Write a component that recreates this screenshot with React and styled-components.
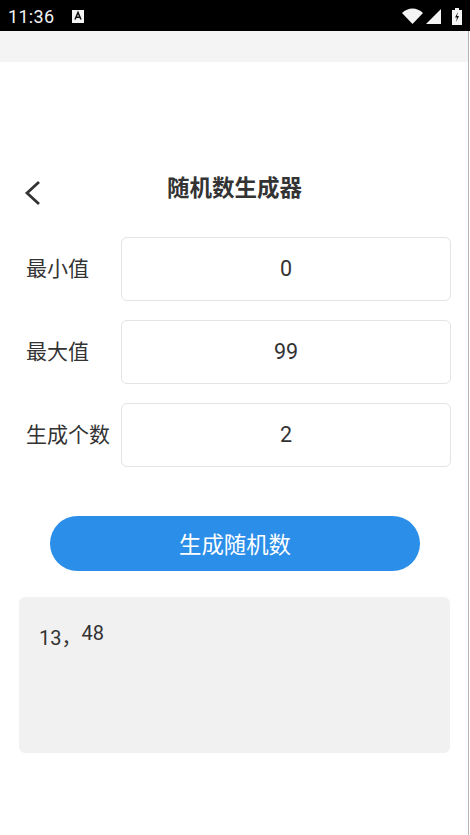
import React from 'react';
import styled, { createGlobalStyle } from 'styled-components';

const GlobalStyle = createGlobalStyle`
  html, body {
    margin: 0;
    padding: 0;
    background: #fff;
  }
  * {
    box-sizing: border-box;
  }
`;

const Page = styled.div`
  width: 470px;
  height: 835px;
  overflow: hidden;
  display: flex;
  flex-direction: column;
  background: #fff;
  color: #333;
  font-family: Roboto, "Noto Sans CJK SC", sans-serif;
`;

const StatusBar = styled.div`
  height: 31px;
  flex: none;
  background: #000;
  display: flex;
  align-items: center;
  padding: 1px 0 0 8px;
  color: #f2f2f2;
`;

const Clock = styled.span`
  font-size: 18px;
  letter-spacing: 0.3px;
  width: 64px;
`;

const StatusIcons = styled.div`
  margin-left: auto;
  display: flex;
  align-items: center;
  gap: 4px;
  padding-right: 8px;
`;

const SignalIcon = styled.svg`
  margin-left: -1px;
`;

const BatteryIcon = styled.svg`
  margin-left: 7px;
`;

const Body = styled.div`
  flex: 1;
  width: 469px;
  border-right: 1px solid #b4b4b4;
`;

const GreyBand = styled.div`
  height: 31px;
  background: #f4f4f4;
`;

const Header = styled.div`
  margin-top: 112px;
  height: 40px;
  display: flex;
  align-items: center;
  padding-left: 23px;
  position: relative;
`;

const BackIcon = styled.svg`
  width: 20px;
  height: 28px;
  margin-top: -3px;
`;

const Title = styled.h1`
  position: absolute;
  left: 0;
  right: 0;
  top: 0;
  margin: 0;
  padding-left: 1px;
  text-align: center;
  font-size: 22.5px;
  line-height: 28px;
  font-weight: 700;
  color: #333;
`;

const Form = styled.div`
  margin-top: 23px;
  padding: 0 17px 0 26px;
  display: flex;
  flex-direction: column;
  gap: 19px;
`;

const Row = styled.div`
  display: flex;
  align-items: center;
  height: 64px;
`;

const Label = styled.span`
  width: 95px;
  flex: none;
  padding-bottom: 4px;
  font-size: 21px;
  color: #333;
`;

const NumberBox = styled.div`
  width: 330px;
  height: 64px;
  flex: none;
  padding-bottom: 2px;
  border: 1px solid #e4e4e4;
  border-radius: 6px;
  display: flex;
  align-items: center;
  justify-content: center;
  font-size: 21.5px;
  color: #333;
`;

const GenerateButton = styled.button`
  display: block;
  width: 370px;
  height: 55px;
  margin: 49px 0 0 50px;
  padding: 0 0 2px;
  border: none;
  border-radius: 28px;
  background: #2b8ee8;
  color: #fff;
  font-family: inherit;
  font-size: 22.4px;
`;

const ResultBox = styled.div`
  width: 431px;
  height: 156px;
  margin: 26px 0 0 19px;
  padding: 21px 20px;
  border-radius: 6px;
  background: #f1f1f1;
  font-size: 20px;
  line-height: 30px;
  color: #333;
`;

const RaisedNumber = styled.span`
  vertical-align: 5px;
`;

const fields = [
  { label: '最小值', value: '0' },
  { label: '最大值', value: '99' },
  { label: '生成个数', value: '2' },
];

export default function App() {
  return (
    <Page>
      <GlobalStyle />
      <StatusBar>
        <Clock>11:36</Clock>
        <svg width="12" height="13" viewBox="0 0 12 13">
          <rect width="12" height="13" fill="#f4f4f4" />
          <path d="M3 9.5 6 2.5l3 7M4.2 7.2h3.6" fill="none" stroke="#111" strokeWidth="1.5" />
        </svg>
        <StatusIcons>
          <svg width="21" height="16" viewBox="0 0 21 16">
            <path d="M0 5C6-1 15-1 21 5L10.5 16z" fill="#f4f4f4" />
          </svg>
          <SignalIcon width="15" height="15" viewBox="0 0 15 15">
            <path d="M15 0v15H0z" fill="#f4f4f4" />
          </SignalIcon>
          <BatteryIcon width="10" height="17" viewBox="0 0 10 17">
            <path d="M3 0h4v2h3v15H0V2h3z" fill="#f4f4f4" />
            <path d="M6 4 3 9.5h2L4 14l3-6H5z" fill="#111" />
          </BatteryIcon>
        </StatusIcons>
      </StatusBar>
      <Body>
        <GreyBand />
        <Header>
          <BackIcon viewBox="0 0 20 28">
            <path d="M16 3 4 14l12 11" fill="none" stroke="#333" strokeWidth="2.8" />
          </BackIcon>
          <Title>随机数生成器</Title>
        </Header>
        <Form>
          {fields.map((field) => (
            <Row key={field.label}>
              <Label>{field.label}</Label>
              <NumberBox>{field.value}</NumberBox>
            </Row>
          ))}
        </Form>
        <GenerateButton>生成随机数</GenerateButton>
        <ResultBox>
          13，<RaisedNumber>48</RaisedNumber>
        </ResultBox>
      </Body>
    </Page>
  );
}
